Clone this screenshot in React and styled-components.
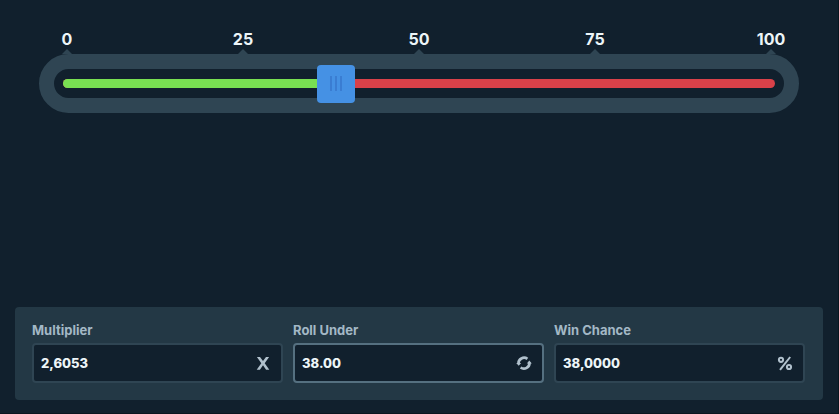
import React, { useState } from 'react'
import styled, { createGlobalStyle } from 'styled-components'

const colors = {
  background: '#11202d',
  edge: '#0a151f',
  frame: '#2f4553',
  panel: '#233845',
  win: '#78e052',
  lose: '#d94149',
  thumb: '#4591e4',
  grip: '#3a7dd2',
  text: '#edf5f8',
  label: '#a3b8c6',
  icon: '#b1c1cd',
  active: '#557080',
}

const GlobalStyle = createGlobalStyle`
  * {
    box-sizing: border-box;
  }

  body {
    margin: 0;
    background-color: ${colors.background};
    color: ${colors.text};
    font-family: Inter, "Liberation Sans", sans-serif;
  }
`

const Main = styled.main`
  display: flex;
  flex-direction: column;
  justify-content: space-between;
  min-height: 100vh;
  padding: 29px 15px 13px 15px;
  border: solid ${colors.edge};
  border-width: 0 1px 1px 0;
`

const SliderSection = styled.section`
  padding: 0 24px;
`

/**
 * Scale above the slider
 */
const Scale = styled.div`
  display: flex;
  justify-content: space-between;
  padding: 0 8px;
`

const Mark = styled.span`
  display: flex;
  flex-direction: column;
  align-items: center;
  width: 40px;
  font-size: 16px;
  font-weight: 700;
  line-height: 20px;

  &::after {
    content: '';
    border: 5px solid transparent;
    border-top-width: 0;
    border-bottom-color: ${colors.frame};
  }
`

/**
 * Slider frame, the rail and the range input share one grid cell
 */
const Frame = styled.div`
  display: grid;
  align-items: center;
  height: 59px;
  border: 15px solid ${colors.frame};
  border-radius: 30px;

  > * {
    grid-area: 1 / 1;
  }
`

const Rail = styled.div`
  display: flex;
  height: 9px;
  margin: 0 9px;
  border-radius: 5px;
  background-color: ${colors.lose};
  overflow: hidden;
`

const RailFill = styled.div`
  background-color: ${colors.win};
`

const gripLines = `
  linear-gradient(${colors.grip}, ${colors.grip}) 13px 11px / 2px 15px no-repeat,
  linear-gradient(${colors.grip}, ${colors.grip}) 18px 11px / 2px 15px no-repeat,
  linear-gradient(${colors.grip}, ${colors.grip}) 23px 11px / 2px 15px no-repeat
`

const Range = styled.input`
  appearance: none;
  width: 100%;
  height: 38px;
  margin: -5px 0;
  background: transparent;
  cursor: pointer;
  outline: none;

  &::-webkit-slider-thumb {
    appearance: none;
    width: 38px;
    height: 38px;
    border: none;
    border-radius: 4px;
    background: ${gripLines}, ${colors.thumb};
  }
`

/**
 * Bottom panel
 */
const Panel = styled.section`
  display: grid;
  grid-template-columns: repeat(3, 1fr);
  gap: 10px;
  padding: 14px 18px 17px 17px;
  border-radius: 4px;
  background-color: ${colors.panel};
`

const FieldWrapper = styled.div`
  display: flex;
  flex-direction: column;
  gap: 3px;
  min-width: 0;
`

const Label = styled.label`
  color: ${colors.label};
  font-size: 13px;
  font-weight: 700;
  line-height: 19px;
`

const InputBox = styled.div`
  display: flex;
  align-items: center;
  height: 40px;
  padding: 0 10px 0 7px;
  border: 2px solid ${({ $active }) => ($active ? colors.active : colors.frame)};
  border-radius: 4px;
  background-color: ${colors.background};
  color: ${colors.icon};

  svg {
    flex: none;
  }
`

const TextInput = styled.input`
  flex: 1;
  min-width: 0;
  padding: 0;
  border: none;
  outline: none;
  background: transparent;
  color: ${colors.text};
  font-family: inherit;
  font-size: 13px;
  font-weight: 800;
`

const IconButton = styled.button`
  display: flex;
  padding: 0;
  border: none;
  background: transparent;
  color: inherit;
  cursor: pointer;
`

const TimesIcon = () => (
  <svg width="16" height="16" viewBox="0 0 16 16" fill="currentColor" aria-hidden="true">
    <path d="M1.9 1.9H5L8 6.1l3-4.2h3.1L9.7 8.2l4.6 6.6h-3.2L8 10.3l-3.1 4.5H1.7l4.6-6.6z" />
  </svg>
)

const SwapIcon = () => (
  <svg width="16" height="16" viewBox="0 0 16 16" aria-hidden="true">
    <path d="M2.5 8.8A5.6 5.6 0 0 1 11.4 3.9M13.5 7.6A5.6 5.6 0 0 1 4.6 12.5" fill="none" stroke="currentColor" strokeWidth="2.7" />
    <path d="M0.2 8h5L2.7 10.8zM15.8 8.4h-5L13.3 5.6z" fill="currentColor" />
  </svg>
)

const PercentIcon = () => (
  <svg width="16" height="16" viewBox="0 0 16 16" fill="none" stroke="currentColor" strokeWidth="2" aria-hidden="true">
    <circle cx="4" cy="4.8" r="2.1" />
    <circle cx="12" cy="12" r="2.1" />
    <path d="M13.2 2L3 14.8" />
  </svg>
)

const Field = ({ id, label, active, icon, ...inputProps }) => (
  <FieldWrapper>
    <Label htmlFor={id}>{label}</Label>
    <InputBox $active={active}>
      <TextInput type="text" id={id} autoComplete="off" {...inputProps} />
      {icon}
    </InputBox>
  </FieldWrapper>
)

const format = (number) => number.toFixed(4).replace('.', ',')

/**
 * @function Dice game controls
 * @returns {JSX}
 */
const App = () => {
  const [target, setTarget] = useState(38)
  const [rollOver, setRollOver] = useState(false)

  const chance = rollOver ? 100 - target : target
  const multiplier = chance > 0 ? 99 / chance : 0

  const handleSwap = () => {
    setRollOver(!rollOver)
    setTarget(100 - target)
  }

  return (
    <Main>
      <GlobalStyle />
      <SliderSection>
        <Scale>
          {[0, 25, 50, 75, 100].map((mark) => (
            <Mark key={mark}>{mark}</Mark>
          ))}
        </Scale>
        <Frame>
          <Rail>
            <RailFill style={{ width: `${target}%` }} />
          </Rail>
          <Range type="range" min="0" max="100" aria-label="Roll Under"
            value={target}
            onChange={(e) => setTarget(Number(e.target.value))} />
        </Frame>
      </SliderSection>

      <Panel>
        <Field id="multiplier" label="Multiplier" value={format(multiplier)} readOnly icon={<TimesIcon />} />
        <Field id="target" label={rollOver ? 'Roll Over' : 'Roll Under'} active
          value={target.toFixed(2)}
          readOnly
          icon={
            <IconButton type="button" aria-label="Swap" onClick={handleSwap}>
              <SwapIcon />
            </IconButton>
          } />
        <Field id="chance" label="Win Chance" value={format(chance)} readOnly icon={<PercentIcon />} />
      </Panel>
    </Main>
  )
}

export default App
